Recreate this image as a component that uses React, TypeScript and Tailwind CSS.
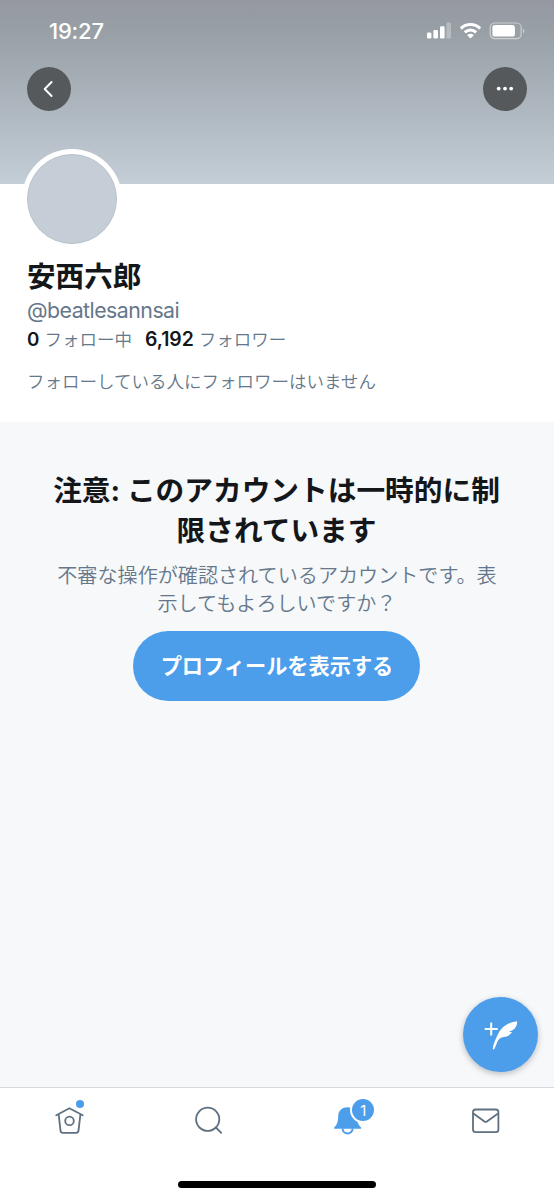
import React from 'react';

const StatusBar: React.FC = () => (
  <div className="flex h-[61px] items-center justify-between pl-[49px] pr-[29px] text-white">
    <span className="w-[60px] text-[22px] leading-none font-medium tracking-[-0.2px]">19:27</span>
    <div className="flex items-center">
      <svg width="26" height="17" viewBox="0 0 26 17" fill="currentColor">
        <rect x="2" y="10.5" width="4.4" height="6" rx="1.3" />
        <rect x="8.4" y="8" width="4.6" height="8.5" rx="1.3" />
        <rect x="15" y="4.3" width="4.6" height="12.2" rx="1.3" />
        <rect x="21.4" y="0.6" width="4.6" height="15.9" rx="1.3" opacity="0.3" />
      </svg>
      <svg className="ml-[9px]" width="21" height="16" viewBox="0 0 21 16" fill="currentColor">
        <path d="M10.5 0C6.5 0 2.9 1.5.2 4.1l-.1.6 1.6 1.7.5 0A12 12 0 0 1 10.5 3.1a12 12 0 0 1 8.3 3.3l.5 0 1.6-1.7-.1-.6A14.9 14.9 0 0 0 10.5 0z" />
        <path d="M10.5 5.4A9.7 9.7 0 0 0 4 7.9v.6l1.6 1.7.6 0A6.3 6.3 0 0 1 10.5 8.5a6.3 6.3 0 0 1 4.3 1.7l.6 0L17 8.5v-.6A9.7 9.7 0 0 0 10.5 5.4z" />
        <path d="M10.5 10.7a4.6 4.6 0 0 0-3 1.1v.6l2.7 2.9.6 0 2.7-2.9v-.6a4.6 4.6 0 0 0-3-1.1z" />
      </svg>
      <svg className="ml-[8px]" width="36" height="18" viewBox="0 0 36 18" fill="none">
        <rect x="1.2" y="1" width="31" height="15.6" rx="4.6" stroke="currentColor" strokeWidth="1.2" opacity="0.5" />
        <rect x="3.4" y="3.1" width="22.5" height="11.4" rx="2.6" fill="currentColor" />
        <path d="M34 6.4c1.8.8 1.8 4 0 4.8z" fill="currentColor" opacity="0.5" />
      </svg>
    </div>
  </div>
);

const RoundButton: React.FC<{ label: string; children: React.ReactNode }> = ({ label, children }) => (
  <button aria-label={label} className="flex size-[44px] items-center justify-center rounded-full bg-[#55595c] text-white">
    {children}
  </button>
);

const Header: React.FC = () => (
  <header className="h-[184px] shrink-0 bg-linear-to-b from-[#9698a1] via-[#979fa5] via-15% to-[#c4ced7]">
    <StatusBar />
    <div className="flex justify-between px-[27px] pt-[5.5px]">
      <RoundButton label="戻る">
        <svg width="20" height="20" viewBox="0 0 20 20" fill="none" stroke="currentColor" strokeWidth="1.9" strokeLinecap="round" strokeLinejoin="round">
          <path d="M12.6 3 5.7 10l6.9 7" />
        </svg>
      </RoundButton>
      <RoundButton label="その他">
        <svg width="18" height="6" viewBox="0 0 18 6" fill="currentColor">
          <circle cx="2.7" cy="2.6" r="1.9" />
          <circle cx="9" cy="2.6" r="1.9" />
          <circle cx="15.2" cy="2.6" r="1.9" />
        </svg>
      </RoundButton>
    </div>
  </header>
);

const Profile: React.FC = () => (
  <section className="h-[238px] shrink-0 bg-white px-[27px] text-[#65778a]">
    <div className="relative -mt-[35px] -ml-[5px] size-[100px] rounded-full bg-white p-[5px]">
      <div className="size-full rounded-full border border-[#b9c2ca] bg-[#c5cdd6]" />
    </div>
    <h1 className="mt-[8px] text-[28.6px] leading-[40px] font-bold text-[#14171a]">安西六郎</h1>
    <p className="-mt-px text-[21.3px] leading-[28px] tracking-[-0.52px]">@beatlesannsai</p>
    <p className="flex h-[31px] items-baseline text-[17.5px] leading-[30px] font-[350]">
      <span className="mr-[5px] text-[18.8px] font-semibold text-[#14171a]">0</span>
      フォロー中
      <span className="mr-[5px] ml-[13px] text-[19.4px] font-semibold text-[#14171a]">6,192</span>
      フォロワー
    </p>
    <p className="mt-[12px] text-[17.5px] leading-[30px] font-[350]">フォローしている人にフォロワーはいません</p>
  </section>
);

const Notice: React.FC = () => (
  <section className="flex flex-1 flex-col items-center bg-[#f6f8fa] px-[50px] pt-[48.5px] text-center">
    <h2 className="-ml-[1px] text-[28.7px] leading-[40px] font-bold whitespace-nowrap text-[#14171a]">
      注意: このアカウントは一時的に制
      <br />
      限されています
    </h2>
    <p className="mt-[11.5px] text-[20.1px] leading-[28px] font-[350] whitespace-nowrap text-[#65778a]">
      不審な操作が確認されているアカウントです。表
      <br />
      示してもよろしいですか？
    </p>
    <button className="mt-[13px] h-[70px] w-[287px] -translate-x-px rounded-full bg-[#4c9eeb] pt-[2px] pl-[2px] text-[21.2px] font-bold whitespace-nowrap text-white">
      プロフィールを表示する
    </button>
    <button
      aria-label="ツイートする"
      className="mt-auto -mr-[34px] mb-[15px] flex size-[75px] items-center justify-center self-end rounded-full bg-[#4c9eeb] text-white shadow-[0_2px_6px_rgba(0,0,0,0.25)]"
    >
      <svg width="36" height="32" viewBox="0 0 36 32" fill="currentColor">
        <path d="M8.2 3.6v13M1.7 10.1h13" stroke="currentColor" strokeWidth="2" fill="none" />
        <path d="M9.8 29.9C9.9 26 12.300 21 14.2 16.800 17.8 8.600 23 3.800 34.100 2.200c.3 5.100-2.500 9-8.100 10.200.8.6 1.800.8 3 .7-2 3-4.600 4.500-8.200 4.800-3.600.3-5 2-6.300 4.600-1.200 2.500-1.900 4.800-3 7.300-.5.900-1.700 1-1.700.1z" />
      </svg>
    </button>
  </section>
);

const TabBar: React.FC = () => (
  <nav className="h-[112px] shrink-0 border-t border-[#d3d9df] bg-white text-[#5f7080]">
    <div className="grid h-[66px] grid-cols-4">
      <button aria-label="ホーム" className="flex items-center justify-center">
        <span className="relative">
          <svg width="30" height="30" viewBox="0 0 30 30" fill="none" stroke="currentColor" strokeWidth="1.8" strokeLinejoin="round" strokeLinecap="round">
            <path d="M2.3 9.3 15.4 2.3l13.3 7M4.7 8.7l1.8 16c.2 1.5.9 2.2 2.3 2.2h13.4c1.4 0 2.1-.7 2.3-2.2l1.9-16" />
            <circle cx="15.5" cy="14.9" r="4.3" />
          </svg>
          <span className="absolute -top-[6px] left-[22px] size-[8px] rounded-full bg-[#4c9eeb]" />
        </span>
      </button>
      <button aria-label="検索" className="flex items-center justify-center">
        <svg width="30" height="30" viewBox="0 0 30 30" fill="none" stroke="currentColor" strokeWidth="1.8" strokeLinecap="round">
          <circle cx="14.7" cy="13.3" r="11.6" />
          <path d="m22.9 21.5 5.3 5.3" />
        </svg>
      </button>
      <button aria-label="通知" className="flex items-center justify-center text-[#4c9eeb]">
        <span className="relative left-px">
          <svg width="30" height="30" viewBox="0 0 30 30" fill="currentColor">
            <path d="M15.5 1.3c-5.200 0-8.800 3.200-9.200 8L5.9 14c-.3 3.300-1.500 5.200-3.500 7.200-.7.8-.4 1.500.5 1.500h25.400c.9 0 1.200-.7.500-1.500-2-2-3.300-3.900-3.600-7.200l-.4-4.700c-.4-4.800-4.100-8-9.300-8z" />
            <path d="M10.600 22.500a5 5 0 0 0 10 0" fill="none" stroke="currentColor" strokeWidth="2" />
          </svg>
          <span className="absolute -top-[9px] left-[18px] flex size-[26px] items-center justify-center rounded-full border-2 border-white bg-[#4c9eeb] text-[15px] leading-none text-white">
            1
          </span>
        </span>
      </button>
      <button aria-label="メッセージ" className="flex items-center justify-center">
        <svg width="30" height="30" viewBox="0 0 30 30" fill="none" stroke="currentColor" strokeWidth="1.8" strokeLinejoin="round">
          <rect x="3" y="3.5" width="25.4" height="22.6" rx="2.6" />
          <path d="m3.4 7.5 11.1 8c.8.5 1.6.5 2.4 0l11.1-8" />
        </svg>
      </button>
    </div>
    <div className="mx-auto mt-[27px] h-[7px] w-[198px] rounded-full bg-black" />
  </nav>
);

export default function App() {
  return (
    <div className="flex h-[1199px] w-[554px] flex-col overflow-hidden bg-white font-[Inter,'Noto_Sans_CJK_JP',sans-serif]">
      <Header />
      <Profile />
      <Notice />
      <TabBar />
    </div>
  );
}
